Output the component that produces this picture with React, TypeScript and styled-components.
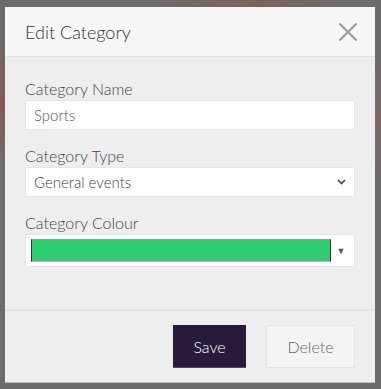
import React, { useState } from 'react';
import styled, { createGlobalStyle } from 'styled-components';

const GlobalStyle = createGlobalStyle`
  html, body {
    margin: 0;
    padding: 0;
  }
  body {
    font-family: Lato, "Open Sans", sans-serif;
    width: 381px;
    height: 389px;
    overflow: hidden;
  }
`;

const Backdrop = styled.div`
  width: 381px;
  height: 389px;
  box-sizing: border-box;
  padding: 7px 6px 7px 5px;
  background:
    radial-gradient(ellipse 90px 40px at 250px 0px, rgba(130, 95, 80, 0.8), transparent),
    radial-gradient(ellipse 30px 60px at 2px 100px, rgba(150, 80, 70, 0.6), transparent),
    radial-gradient(ellipse 30px 60px at 380px 120px, rgba(140, 100, 100, 0.5), transparent),
    #6d6b6b;
`;

const Modal = styled.div`
  width: 370px;
  height: 375px;
  display: flex;
  flex-direction: column;
  background: #eeeeee;
  box-shadow: 0 1px 0 #bdbdbd;
`;

const Header = styled.div`
  height: 50px;
  box-sizing: border-box;
  display: flex;
  align-items: center;
  justify-content: space-between;
  padding: 0 15px 0 20px;
  background: #f7f7f7;
  border-bottom: 1px solid #e4e4e4;
`;

const Title = styled.h4`
  margin: 0;
  font-size: 18px;
  font-weight: 300;
  color: #333;
`;

const CloseButton = styled.button`
  width: 24px;
  height: 24px;
  padding: 0;
  border: none;
  background: none;
  cursor: pointer;
  display: flex;
  align-items: center;
  justify-content: center;
`;

const Body = styled.div`
  flex: 1;
  padding: 22px 20px 0 20px;
  display: flex;
  flex-direction: column;
  gap: 16px;
`;

const Field = styled.div`
  display: flex;
  flex-direction: column;
  gap: 2px;
`;

const Label = styled.label`
  font-size: 16px;
  font-weight: 300;
  color: #444;
  line-height: 19px;
`;

const TextInput = styled.input`
  box-sizing: border-box;
  width: 330px;
  height: 30px;
  padding: 0 8px;
  border: 1px solid #e6e6e6;
  background: #fff;
  font-family: inherit;
  font-size: 15px;
  font-weight: 300;
  color: #555;
  outline: none;
`;

const SelectBox = styled.div`
  box-sizing: border-box;
  width: 330px;
  height: 30px;
  padding: 0 8px;
  border: 1px solid #e6e6e6;
  background: #fff;
  display: flex;
  align-items: center;
  justify-content: space-between;
  font-size: 15px;
  font-weight: 300;
  color: #444;
`;

const ColourPicker = styled.div`
  box-sizing: border-box;
  width: 330px;
  height: 33px;
  padding: 4px 7px 4px 5px;
  border: 1px solid #e6e6e6;
  background: #fff;
  display: flex;
  align-items: center;
  gap: 4px;
`;

const Swatch = styled.div<{ $colour: string }>`
  flex: 1;
  height: 23px;
  box-sizing: border-box;
  background: ${(p) => p.$colour};
  border: 1px solid #333;
  border-top-color: #999;
  border-bottom-color: #bbb;
`;

const Arrow = styled.span`
  font-size: 9px;
  color: #555;
  width: 12px;
  text-align: center;
`;

const Footer = styled.div`
  height: 73px;
  box-sizing: border-box;
  border-top: 2px solid #e4e4e4;
  display: flex;
  justify-content: flex-end;
  align-items: flex-start;
  gap: 20px;
  padding: 14px 20px 0 0;
`;

const Button = styled.button<{ $primary?: boolean }>`
  height: 43px;
  box-sizing: border-box;
  padding: 0;
  font-family: inherit;
  font-size: 16px;
  font-weight: 300;
  cursor: pointer;
  width: ${(p) => (p.$primary ? '73px' : '89px')};
  background: ${(p) => (p.$primary ? '#281a3a' : '#f4f4f4')};
  color: ${(p) => (p.$primary ? '#fff' : '#666')};
  border: ${(p) => (p.$primary ? 'none' : '1px solid #e2e2e2')};
  border-bottom: ${(p) => (p.$primary ? '1px solid #5a4b6a' : '1px solid #e2e2e2')};
`;

const App = () => {
  const [name, setName] = useState('Sports');

  return (
    <>
      <GlobalStyle />
      <Backdrop>
        <Modal>
          <Header>
            <Title>Edit Category</Title>
            <CloseButton aria-label="Close">
              <svg width="20" height="20" viewBox="0 0 20 20">
                <path d="M1.5 1.5 L18.5 18.5 M18.5 1.5 L1.5 18.5" stroke="#9a9a9a" strokeWidth="2" />
              </svg>
            </CloseButton>
          </Header>
          <Body>
            <Field>
              <Label>Category Name</Label>
              <TextInput value={name} onChange={(e) => setName(e.target.value)} />
            </Field>
            <Field>
              <Label>Category Type</Label>
              <SelectBox>
                <span>General events</span>
                <svg width="9" height="6" viewBox="0 0 9 6">
                  <path d="M1 1 L4.5 4.5 L8 1" stroke="#444" strokeWidth="1.6" fill="none" />
                </svg>
              </SelectBox>
            </Field>
            <Field>
              <Label>Category Colour</Label>
              <ColourPicker>
                <Swatch $colour="#2ecc71" />
                <Arrow>▼</Arrow>
              </ColourPicker>
            </Field>
          </Body>
          <Footer>
            <Button $primary>Save</Button>
            <Button>Delete</Button>
          </Footer>
        </Modal>
      </Backdrop>
    </>
  );
};

export default App;
